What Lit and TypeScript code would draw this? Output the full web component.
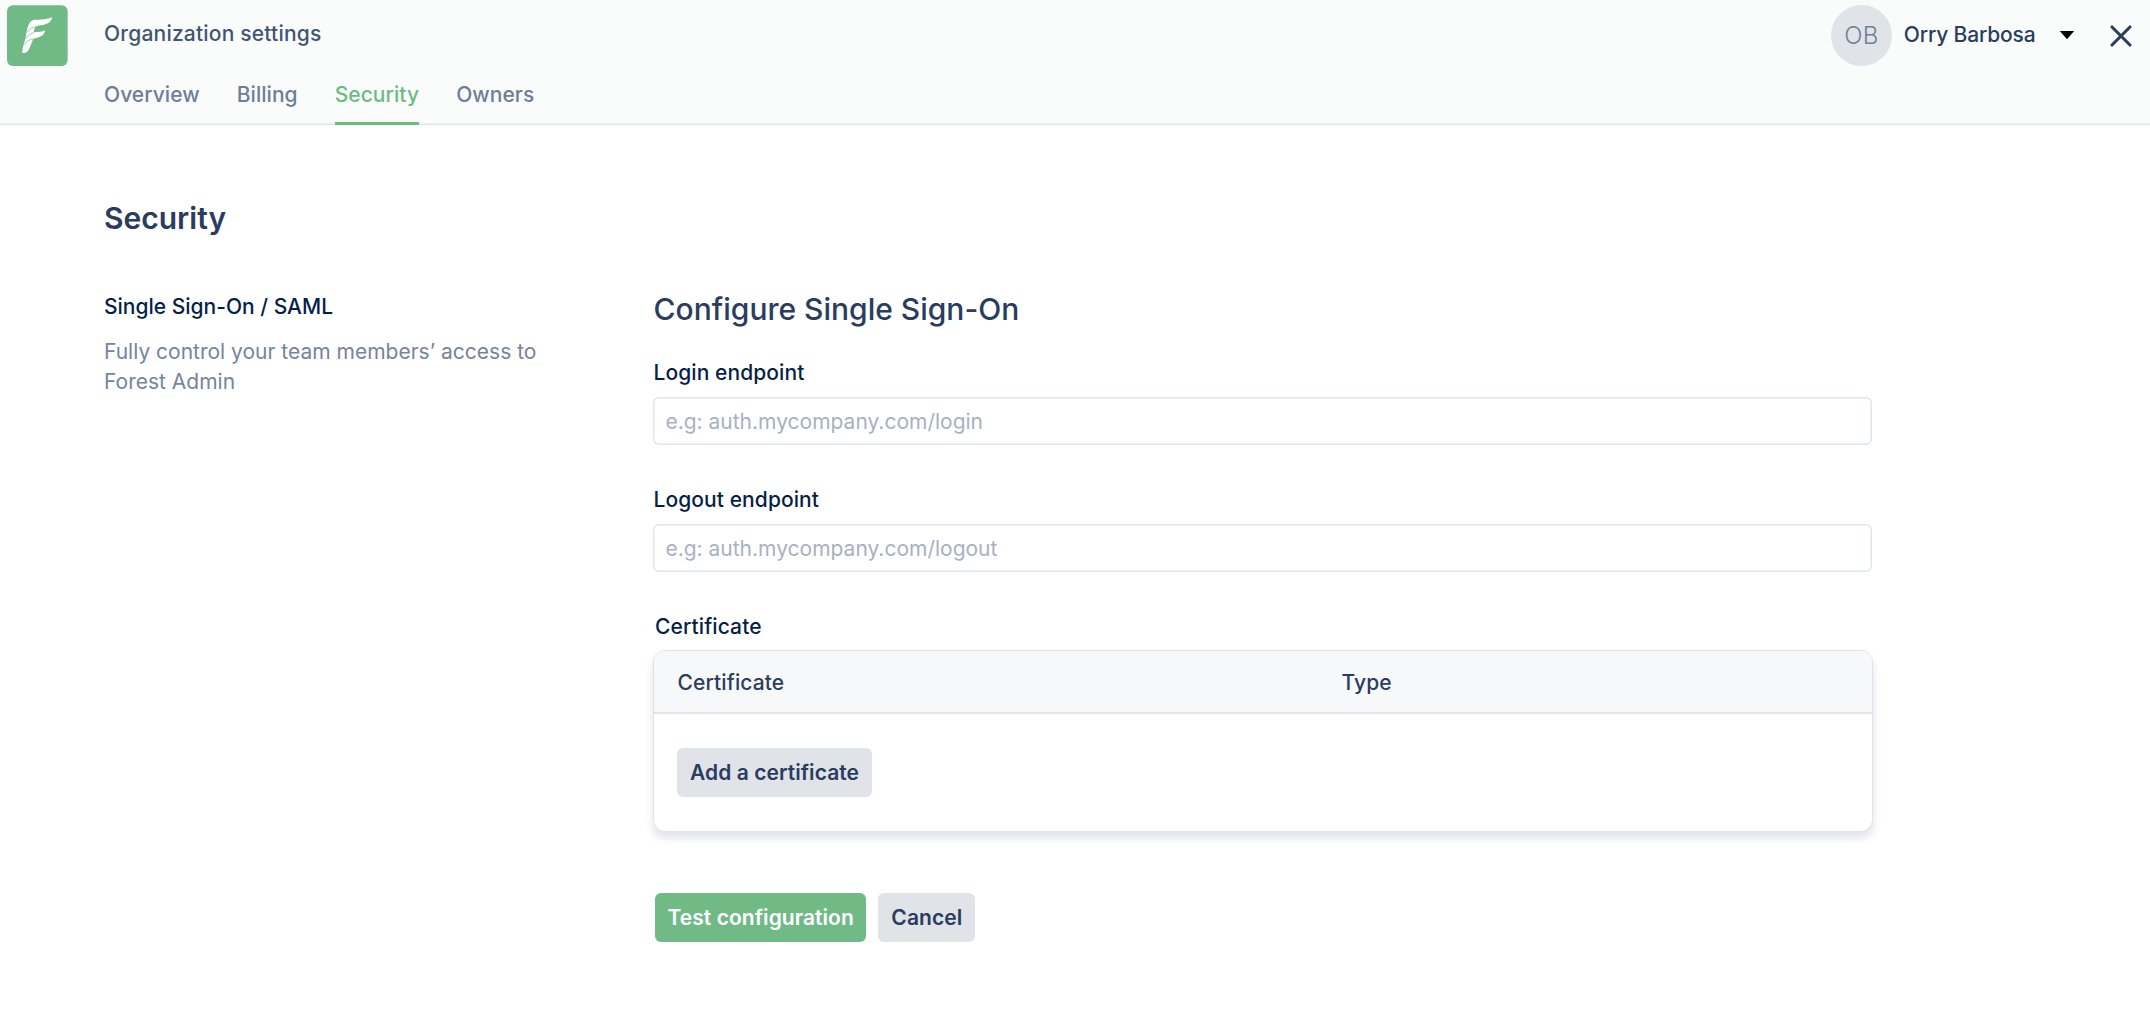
import { LitElement, html, css } from "lit";
import { customElement, property } from "lit/decorators.js";
import { classMap } from "lit/directives/class-map.js";

const TABS = ["Overview", "Billing", "Security", "Owners"];

@customElement("settings-header")
export class SettingsHeader extends LitElement {
  @property() active = "Security";

  static styles = css`
    :host { display: block; }
    .bar {
      box-sizing: border-box; height: 125px; display: flex; align-items: flex-start;
      background: #fafcfc; border-bottom: 1px solid #dde2e8;
      box-shadow: inset 0 -1px 0 #f0f3f5; padding-left: 7px;
    }
    .logo { display: block; width: 61px; height: 61px; margin-top: 5px; }
    .center { flex: 1; margin-left: 36px; padding-top: 18px; display: flex; flex-direction: column; gap: 30px; }
    .title { line-height: 31px; color: #425473; font-weight: 500; letter-spacing: 0.2px; }
    .tabs { display: flex; gap: 37.1px; }
    .tab { line-height: 31px; height: 46px; box-sizing: border-box; color: #6f7d96; letter-spacing: 0.04px; font-weight: 500; }
    .tab.active { color: #6cbb81; border-bottom: 3px solid #6cbb81; }
    .user { display: flex; align-items: flex-start; padding-right: 17px; }
    .avatar {
      width: 61px; height: 61px; margin-top: 5px; border-radius: 50%; background: #e0e3e8;
      display: flex; align-items: center; justify-content: center;
      font-size: 24px; font-weight: 300; letter-spacing: 0.2px; color: #6f7f9a;
    }
    .name { margin: 19px 0 0 12px; line-height: 31px; font-weight: 500; letter-spacing: -0.17px; color: #2a3c60; }
    .caret { width: 16px; height: 10px; margin: 30px 0 0 23.5px; display: block; }
    .close { width: 24px; height: 24px; margin: 24px 0 0 34px; display: block; }
  `;

  render() {
    return html`
      <header class="bar">
        <svg class="logo" viewBox="21 15 183 183">
          <rect x="21" y="16" width="182" height="182" rx="18" fill="#70ba85" />
          <path fill="#fff" d="M156 51C155 66 142 73 122 76C113 77 108 79 104 83L101 97C115 96 127 96 136 91C133 104 123 112 108 114L99 118C95 129 91 141 86 149C81 157 76 159 66 159C67 145 73 128 77 112C80 98 82 77 90 67C95 60 101 59 112 59C132 58 147 57 156 51Z" />
          <path fill="none" stroke="#70ba85" stroke-width="2" d="M81 97Q88 84 106 80M76 118Q84 102 103 97M71 135Q79 121 101 116" />
        </svg>
        <div class="center">
          <div class="title">Organization settings</div>
          <nav class="tabs">
            ${TABS.map((t) => html`<a class=${classMap({ tab: true, active: t === this.active })}>${t}</a>`)}
          </nav>
        </div>
        <div class="user">
          <span class="avatar">OB</span>
          <span class="name">Orry Barbosa</span>
          <svg class="caret" viewBox="0 0 16 10"><path d="M0.8 1H15.2L8 9.2Z" fill="#000" /></svg>
          <svg class="close" viewBox="0 0 24 24">
            <path d="M3 3L21 21M21 3L3 21" stroke="#2a3c60" stroke-width="3.1" stroke-linecap="round" fill="none" />
          </svg>
        </div>
      </header>
    `;
  }
}

@customElement("endpoint-field")
export class EndpointField extends LitElement {
  @property() label = "";
  @property() placeholder = "";

  static styles = css`
    :host { display: block; }
    .label { display: block; padding-left: 0.5px; line-height: 31px; font-weight: 500; color: #061f48; letter-spacing: 0.08px; }
    .input {
      display: block; box-sizing: border-box; width: 1219px; height: 48px; margin: 9px 0 0;
      padding: 0 12px 0 12.4px; border: 0; outline: 0; border-radius: 6px; background: #fff;
      box-shadow: inset 0 0 0 1.5px #e0e4eb; font: inherit; color: #2a3c60;
    }
    .input::placeholder { color: #a8b1c1; opacity: 1; }
  `;

  render() {
    return html`
      <label class="label">${this.label}</label>
      <input class="input" placeholder=${this.placeholder} />
    `;
  }
}

@customElement("app-root")
export class AppRoot extends LitElement {
  static styles = css`
    :host {
      display: block; min-height: 1016px; background: #fff;
      font-family: Inter, "Liberation Sans", sans-serif; font-size: 21px;
    }
    .page { padding: 73px 277px 0 104px; }
    .heading { margin: 0; font-size: 30px; line-height: 40px; font-weight: 600; letter-spacing: 0; color: #2a3c60; }
    .columns { display: grid; grid-template-columns: 549px 1220px; margin-top: 53px; }
    .about-title { line-height: 31px; font-weight: 500; color: #061f48; }
    .about-text { width: 450px; margin: 15px 0 0; line-height: 30px; color: #76849c; }
    .subheading { margin: 0 0 30px; padding-left: 0.6px; font-size: 30px; line-height: 36px; font-weight: 500; color: #2a3c60; }
    .first { margin-bottom: 39px; }
    .second { margin-bottom: 39px; }
    .label { padding-left: 2px; line-height: 31px; font-weight: 500; letter-spacing: 0.1px; color: #061f48; }
    .card {
      box-sizing: border-box; width: 1220px; height: 182px; margin-top: 8px; border-radius: 12px; overflow: hidden;
      border: 1px solid #dfe3e9; background: #fff; box-shadow: 0 6px 9px rgba(30, 40, 90, 0.13);
    }
    .card-head {
      box-sizing: border-box; height: 63px; padding: 16px 23.5px 0; background: #f6f8fa;
      border-bottom: 2px solid #e1e5ea; display: grid; grid-template-columns: 664px 1fr;
      line-height: 31px; font-weight: 500; letter-spacing: 0.12px; color: #2a3c60;
    }
    .card-body { padding: 34px 23px; display: flex; }
    .btn {
      height: 49px; box-sizing: border-box; padding: 0 13px; border: 0; border-radius: 6px;
      font: 600 21px Inter, "Liberation Sans", sans-serif; letter-spacing: 0.06px;
      background: #e0e3e8; color: #2a3c60; white-space: nowrap;
    }
    .btn.primary { background: #70ba85; color: #fff; padding: 0 12.5px; }
    .actions { display: flex; gap: 12px; margin-top: 61px; padding-left: 2px; }
  `;

  render() {
    return html`
      <settings-header active="Security"></settings-header>
      <main class="page">
        <h1 class="heading">Security</h1>
        <div class="columns">
          <section>
            <div class="about-title">Single Sign-On / SAML</div>
            <p class="about-text">Fully control your team members’ access to Forest Admin</p>
          </section>
          <section>
            <h2 class="subheading">Configure Single Sign-On</h2>
            <endpoint-field class="first" label="Login endpoint" placeholder="e.g: auth.mycompany.com/login"></endpoint-field>
            <endpoint-field class="second" label="Logout endpoint" placeholder="e.g: auth.mycompany.com/logout"></endpoint-field>
            <div class="label">Certificate</div>
            <div class="card">
              <div class="card-head"><span>Certificate</span><span>Type</span></div>
              <div class="card-body"><button class="btn">Add a certificate</button></div>
            </div>
            <div class="actions">
              <button class="btn primary">Test configuration</button>
              <button class="btn">Cancel</button>
            </div>
          </section>
        </div>
      </main>
    `;
  }
}
